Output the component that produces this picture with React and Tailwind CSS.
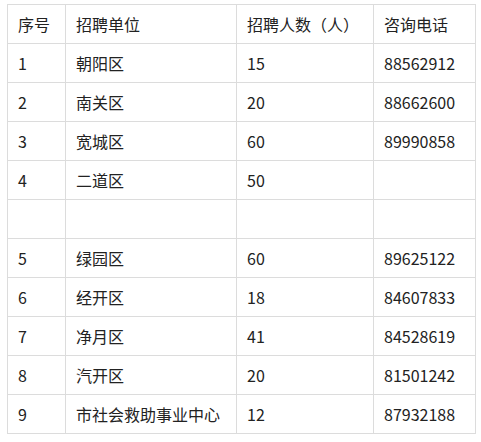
const rows = [
  ['1', '朝阳区', '15', '88562912'],
  ['2', '南关区', '20', '88662600'],
  ['3', '宽城区', '60', '89990858'],
  ['4', '二道区', '50', ''],
  ['', '', '', ''],
  ['5', '绿园区', '60', '89625122'],
  ['6', '经开区', '18', '84607833'],
  ['7', '净月区', '41', '84528619'],
  ['8', '汽开区', '20', '81501242'],
  ['9', '市社会救助事业中心', '12', '87932188'],
];

const cell = 'border border-[#dcdcdc] h-[39px] pl-[10px] p-0 text-left font-normal align-middle';

export default function App() {
  return (
    <div className="bg-white w-[481px] h-[442px] pt-[4px] pl-[7px] text-[16px] text-[#222]" style={{ fontFamily: '"Noto Sans CJK SC", "Noto Sans", sans-serif' }}>
      <table className="table-fixed border-collapse w-[468px]">
        <colgroup>
          <col className="w-[58px]" />
          <col className="w-[171px]" />
          <col className="w-[137px]" />
          <col className="w-[102px]" />
        </colgroup>
        <thead>
          <tr>
            <th className={cell}>序号</th>
            <th className={cell}>招聘单位</th>
            <th className={cell}>招聘人数（人）</th>
            <th className={cell}>咨询电话</th>
          </tr>
        </thead>
        <tbody>
          {rows.map((r, i) => (
            <tr key={i}>
              {r.map((c, j) => (
                <td key={j} className={cell}>{c}</td>
              ))}
            </tr>
          ))}
        </tbody>
      </table>
    </div>
  );
}
